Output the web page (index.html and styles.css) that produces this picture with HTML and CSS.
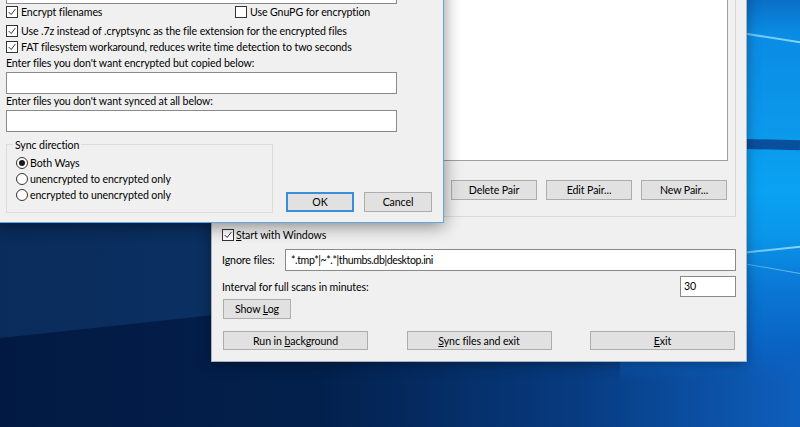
FILE: index.html
```html
<!DOCTYPE html>
<html lang="en">
<head>
  <meta charset="UTF-8">
  <meta name="viewport" content="width=device-width, initial-scale=1.0">
  <title>CryptSync</title>
  <link rel="stylesheet" href="styles.css">
</head>
<body>

  <div class="desktop">
    <!-- Wallpaper pieces -->
    <div class="wall wall-band"></div>
    <div class="wall wall-glow"></div>
    <div class="wall wall-stripe"></div>
    <div class="wall ray ray-top"></div>
    <div class="wall ray ray-up"></div>
    <div class="wall ray ray-down"></div>

    <!-- Main window (inactive, behind) -->
    <div class="window main-win">
      <div class="tab-page">
        <div class="pair-list"></div>
        <div class="pair-buttons">
          <button class="btn btn-pair">Delete Pair</button>
          <button class="btn btn-pair">Edit Pair...</button>
          <button class="btn btn-pair">New Pair...</button>
        </div>
      </div>

      <label class="check start-row">
        <span class="box"><svg viewBox="0 0 12 12"><polyline points="2,6 5,9 10,2.5"/></svg></span>
        <span><u>S</u>tart with Windows</span>
      </label>

      <div class="field-row ignore-row">
        <span class="field-label">Ignore files:</span>
        <div class="textbox ignore-box">*.tmp*|~*.*|thumbs.db|desktop.ini</div>
      </div>

      <div class="field-row interval-row">
        <span>Interval for full scans in minutes:</span>
        <div class="textbox interval-box">30</div>
      </div>

      <div class="log-row">
        <button class="btn btn-log">Show <u>L</u>og</button>
      </div>

      <div class="action-row">
        <button class="btn btn-action">Run in <u>b</u>ackground</button>
        <button class="btn btn-action"><u>S</u>ync files and exit</button>
        <button class="btn btn-action"><u>E</u>xit</button>
      </div>
    </div>

    <!-- Pair dialog (active, in front) -->
    <div class="window dlg">
      <div class="textbox top-box"></div>

      <div class="opt-row">
        <label class="check opt-enc">
          <span class="box"><svg viewBox="0 0 12 12"><polyline points="2,6 5,9 10,2.5"/></svg></span>
          <span>Encrypt filenames</span>
        </label>
        <label class="check">
          <span class="box"></span>
          <span>Use GnuPG for encryption</span>
        </label>
      </div>
      <label class="check opt-row">
        <span class="box"><svg viewBox="0 0 12 12"><polyline points="2,6 5,9 10,2.5"/></svg></span>
        <span>Use .7z instead of .cryptsync as the file extension for the encrypted files</span>
      </label>
      <label class="check opt-row">
        <span class="box"><svg viewBox="0 0 12 12"><polyline points="2,6 5,9 10,2.5"/></svg></span>
        <span>FAT filesystem workaround, reduces write time detection to two seconds</span>
      </label>

      <div class="caption caption-first">Enter files you don't want encrypted but copied below:</div>
      <div class="textbox list-box"></div>
      <div class="caption caption-second">Enter files you don't want synced at all below:</div>
      <div class="textbox list-box list-box-second"></div>

      <div class="dlg-bottom">
        <div class="group">
          <span class="group-title">Sync direction</span>
          <label class="radio radio-first"><span class="dot on"></span>Both Ways</label>
          <label class="radio"><span class="dot"></span>unencrypted to encrypted only</label>
          <label class="radio"><span class="dot"></span>encrypted to unencrypted only</label>
        </div>
        <div class="dlg-buttons">
          <button class="btn btn-ok">OK</button>
          <button class="btn btn-dlg">Cancel</button>
        </div>
      </div>
    </div>
  </div>

</body>
</html>
```

FILE: styles.css
```css
/* General */
body {
  margin: 0;
  font-family: 'Lato', 'Open Sans', sans-serif;
  font-size: 10.6px;
  letter-spacing: -0.1px;
  color: #000;
}

.desktop {
  position: relative;
  width: 800px;
  height: 427px;
  overflow: hidden;
  background: linear-gradient(90deg, #021a43 0%, #03204c 40%, #073b80 72%, #0e5fbd 100%);
}

/* Wallpaper */
.wall {
  position: absolute;
}

.wall-band {
  left: 0;
  top: 0;
  width: 480px;
  height: 345px;
  background: linear-gradient(90deg, #0a2c5c, #0b3468);
  clip-path: polygon(0 0, 100% 0, 100% 83%, 0 98%);
}

.wall-glow {
  left: 620px;
  top: 0;
  width: 180px;
  height: 380px;
  background: linear-gradient(180deg, #0a6fc6 0%, #0a8ce4 9%, #0c96ea 30%, #0aa2f2 50%, #0a96ea 62%, #0a78d6 75%, #0a62c2 92%, rgba(10, 90, 180, 0) 100%);
}

.wall-stripe {
  left: 620px;
  top: 138px;
  width: 180px;
  height: 10px;
  background: #0a4f9c;
  transform: rotate(1.5deg);
}

.ray {
  left: 700px;
  width: 120px;
  height: 2px;
  background: linear-gradient(90deg, rgba(140, 220, 255, 0.5), rgba(160, 230, 255, 0.9));
}

.ray-top {
  top: 35px;
  transform: rotate(9deg);
}

.ray-up {
  top: 250px;
  transform: rotate(-6deg);
}

.ray-down {
  top: 266px;
  height: 1px;
  transform: rotate(10deg);
  opacity: 0.7;
}

/* Windows */
.window {
  position: absolute;
  box-sizing: border-box;
  background: #f0f0f0;
}

.main-win {
  left: 211px;
  top: -20px;
  width: 536px;
  height: 382px;
  border: 1px solid #a9b2bd;
  box-shadow: 0 2px 12px rgba(0, 0, 0, 0.35);
  padding: 0 10px 11px 10px;
  display: flex;
  flex-direction: column;
}

.dlg {
  left: -4px;
  top: -19px;
  width: 448px;
  height: 242px;
  border: 1px solid #62a7dd;
  box-shadow: 0 3px 16px rgba(0, 0, 0, 0.45);
  padding: 0 0 0 9px;
}

/* Controls */
.btn {
  box-sizing: border-box;
  background: #e1e1e1;
  border: 1px solid #adadad;
  font: inherit;
  letter-spacing: inherit;
  color: #000;
  padding: 0;
  margin: 0;
}

.textbox {
  box-sizing: border-box;
  background: #fff;
  border: 1px solid #8a8a8a;
}

.check, .radio {
  display: flex;
  align-items: center;
  white-space: nowrap;
}

.box {
  box-sizing: border-box;
  width: 12px;
  height: 12px;
  border: 1px solid #333;
  background: #fff;
  margin-right: 3px;
  flex: none;
}

.box svg {
  display: block;
  width: 10px;
  height: 10px;
  fill: none;
  stroke: #222;
  stroke-width: 1.1;
}

.dot {
  box-sizing: border-box;
  width: 12px;
  height: 12px;
  border: 1px solid #333;
  border-radius: 50%;
  background: #fff;
  margin-right: 2px;
  flex: none;
  display: flex;
  align-items: center;
  justify-content: center;
}

.dot.on::after {
  content: "";
  width: 6px;
  height: 6px;
  border-radius: 50%;
  background: #1a1a1a;
}

/* Main window parts */
.tab-page {
  flex: 1;
  display: flex;
  flex-direction: column;
  border: 1px solid #d9d9d9;
  border-top: none;
  padding: 0 7px 16px 8px;
}

.pair-list {
  flex: 1;
  background: #fff;
  border: 1px solid #a0a0a0;
  border-top: none;
}

.pair-buttons {
  display: flex;
  justify-content: flex-end;
  gap: 9px;
  margin-top: 19px;
  padding-right: 1px;
}

.btn-pair {
  width: 86px;
  height: 20px;
}

.start-row {
  margin-top: 12px;
  height: 12px;
}

.start-row .box {
  margin-right: 2px;
}

.field-row {
  display: flex;
  align-items: center;
  justify-content: space-between;
}

.ignore-row {
  margin-top: 8px;
  height: 22px;
}

.field-label {
  width: 63px;
  flex: none;
}

.ignore-box {
  flex: 1;
  height: 22px;
  line-height: 20px;
  padding-left: 5px;
  letter-spacing: -0.4px;
}

.interval-row {
  margin-top: 5px;
  height: 21px;
}

.interval-box {
  width: 56px;
  height: 21px;
  line-height: 19px;
  padding-left: 3px;
}

.log-row {
  margin-top: 2px;
}

.btn-log {
  width: 68px;
  height: 20px;
  margin-left: 1px;
}

.action-row {
  display: flex;
  justify-content: space-between;
  margin-top: 12px;
  padding: 0 1px;
}

.btn-action {
  width: 145px;
  height: 19px;
}

/* Dialog parts */
.top-box {
  width: 391px;
  height: 22px;
}

.opt-row {
  display: flex;
  margin-top: 0;
  height: 16px;
  align-items: center;
}

.dlg > .opt-row:first-of-type {
  margin-top: 3px;
}

.opt-enc {
  width: 229px;
}

.caption {
  height: 16px;
  line-height: 16px;
}

.caption-second {
  height: 14px;
  line-height: 14px;
}

.list-box {
  width: 391px;
  height: 22px;
  margin-top: 1px;
}

.list-box-second {
  margin-top: 2px;
}

.dlg-bottom {
  display: flex;
  align-items: flex-end;
  margin-top: 12px;
}

.group {
  box-sizing: border-box;
  width: 267px;
  height: 69px;
  border: 1px solid #dcdcdc;
  padding-left: 9px;
}

.group-title {
  display: table;
  margin: -7px 0 0 -3px;
  padding: 0 2px;
  line-height: 14px;
  background: #f0f0f0;
}

.radio {
  height: 16px;
}

.radio-first {
  margin-top: 2px;
  height: 17px;
}

.dlg-buttons {
  display: flex;
  gap: 10px;
  margin: 0 0 1px 13px;
}

.btn-dlg, .btn-ok {
  width: 68px;
  height: 20px;
}

.btn-ok {
  border: 2px solid #3c8fd6;
}
```
